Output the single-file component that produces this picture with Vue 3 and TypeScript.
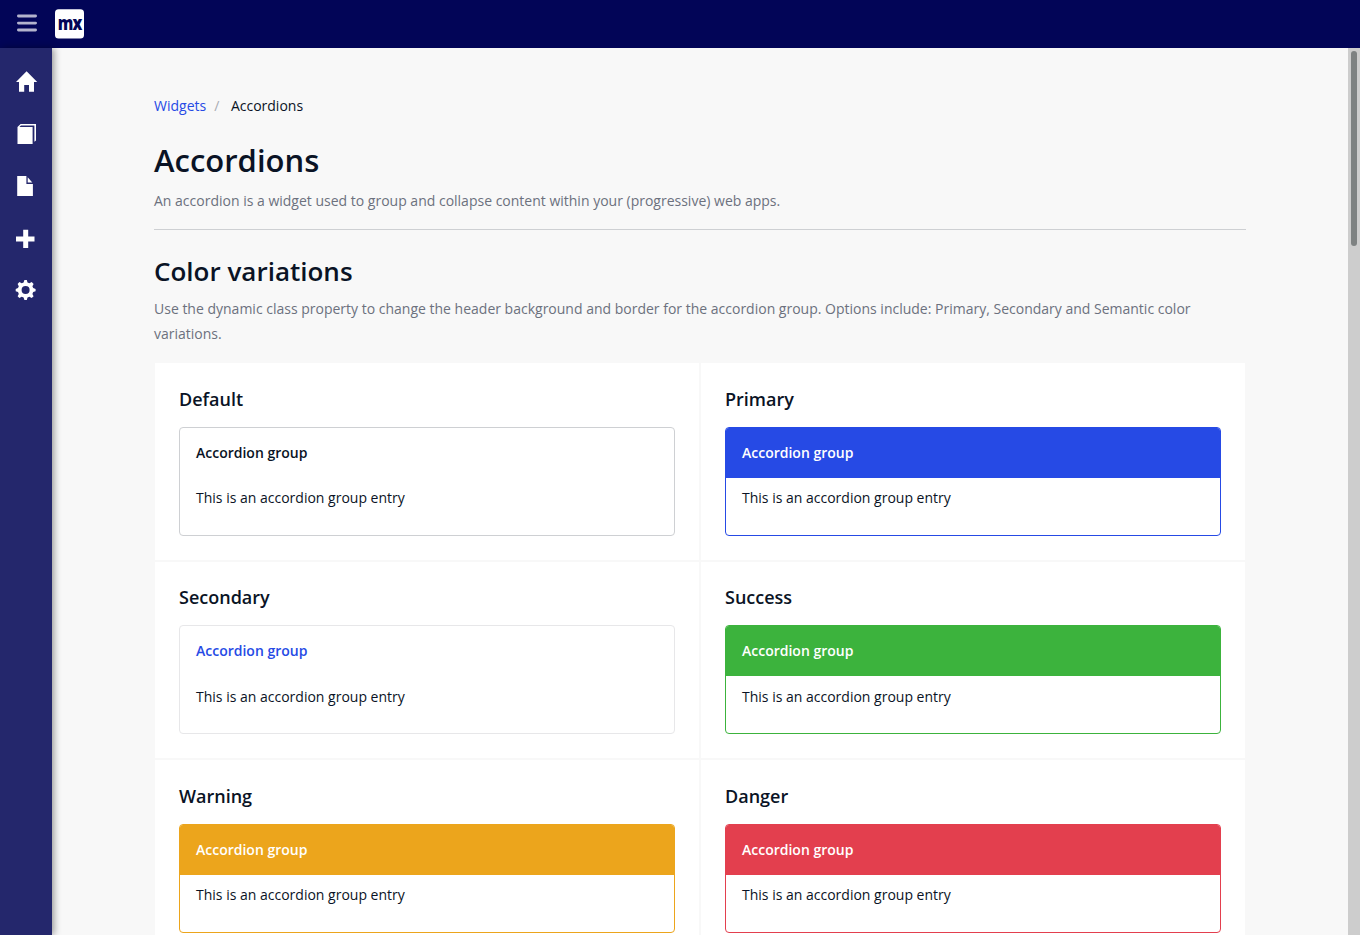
<script setup lang="ts">
interface Variation {
  title: string
  kind: string
}

const variations: Variation[] = [
  { title: 'Default', kind: 'default' },
  { title: 'Primary', kind: 'primary' },
  { title: 'Secondary', kind: 'secondary' },
  { title: 'Success', kind: 'success' },
  { title: 'Warning', kind: 'warning' },
  { title: 'Danger', kind: 'danger' },
]
</script>

<template>
  <div class="app">
    <header class="topbar">
      <button class="toggle" aria-label="Toggle sidebar">
        <svg width="20" height="18" viewBox="0 0 20 18">
          <path d="M1.4 2h17.2M1.4 9.1h17.2M1.4 16h17.2" />
        </svg>
      </button>
      <svg class="logo" width="30" height="30" viewBox="0 0 30 30">
        <rect x="0" y="0.2" width="29" height="29.4" rx="3.6" fill="#fff" />
        <text transform="translate(2.8 20.6) scale(0.8 1)">mx</text>
      </svg>
    </header>
    <div class="body">
      <nav class="sidebar">
        <a><svg viewBox="0 0 24 24"><path d="M12.6 1.2 23.2 12H20v9.8h-5V15h-4.8v6.8H5V12H2z" /></svg></a>
        <a><svg viewBox="0 0 24 24"><path d="M6.6 2H22v16.6l-1.6 1.2V3.4H6.3zM3.5 5 6.6 2l.4 1.4-1.6 1.5h13.2V22H3.5z" /></svg></a>
        <a><svg viewBox="0 0 24 24"><path d="M3.2 2h9.2v8h6.5v12H3.2zM13.7 3.2l4.6 5.4h-4.6z" /></svg></a>
        <a><svg viewBox="0 0 24 24"><path d="M9.2 3.7h5v6.7h6.3v5h-6.3V22h-5v-6.6H2v-5h7.2z" /></svg></a>
        <a>
          <svg viewBox="0 0 24 24">
            <path
              fill-rule="evenodd"
              d="M10.4 2h2.4l.7 2.5 1.9.8 2.3-1.2 1.9 1.8-1.2 2.3.8 1.9 2.4.8v2.4l-2.4.8-.8 1.9 1.2 2.2-1.9 1.8-2.3-1.2-1.9.8-.7 2.4h-2.4l-.8-2.4-1.9-.8L5.4 20l-1.8-1.8L4.8 16 4 14.1l-2.3-.8v-2.4l2.3-.8.8-1.9-1.2-2.3 1.8-1.8 2.3 1.2 1.9-.8zM11.6 8a4 4 0 1 0 0 8 4 4 0 0 0 0-8z"
            />
          </svg>
        </a>
      </nav>
      <main class="content">
        <ol class="breadcrumb">
          <li><a>Widgets</a></li>
          <li class="sep">/</li>
          <li>Accordions</li>
        </ol>
        <h1>Accordions</h1>
        <p class="intro">An accordion is a widget used to group and collapse content within your (progressive) web apps.</p>
        <hr />
        <h2>Color variations</h2>
        <p class="detail">
          Use the dynamic class property to change the header background and border for the accordion group. Options
          include: Primary, Secondary and Semantic color variations.
        </p>
        <div class="grid">
          <section v-for="v in variations" :key="v.kind" class="cell">
            <h3>{{ v.title }}</h3>
            <div class="accordion" :class="v.kind">
              <div class="head">Accordion group</div>
              <div class="entry">This is an accordion group entry</div>
            </div>
          </section>
        </div>
      </main>
      <div class="scrollbar"><div class="thumb" /></div>
    </div>
  </div>
</template>

<style>
body {
  margin: 0;
  overflow: hidden;
}
</style>

<style scoped>
.app {
  height: 100vh;
  display: flex;
  flex-direction: column;
  overflow: hidden;
  font-family: 'Open Sans', sans-serif;
  font-size: 14px;
  line-height: 20px;
  color: #0a1325;
  background: #f8f8f8;
}
.topbar {
  flex: none;
  height: 48px;
  box-sizing: border-box;
  display: flex;
  align-items: center;
  padding-left: 17px;
  background: #020557;
}
.toggle {
  padding: 0;
  margin: 0 18px 2px 0;
  border: 0;
  background: none;
  display: flex;
}
.toggle path {
  stroke: #b3b4cd;
  stroke-width: 2.8;
  stroke-linecap: round;
}
.logo {
  overflow: visible;
}
.logo text {
  font-family: 'Open Sans', sans-serif;
  font-size: 19.5px;
  font-weight: 800;
  letter-spacing: -1.2px;
  fill: #020557;
}
.body {
  flex: 1;
  min-height: 0;
  display: flex;
}
.sidebar {
  flex: none;
  width: 52px;
  z-index: 1;
  display: flex;
  flex-direction: column;
  padding-top: 8px;
  box-sizing: border-box;
  background: #24276c;
  box-shadow: 2px 0 7px rgba(0, 0, 0, 0.4);
}
.sidebar a {
  height: 52px;
  display: flex;
  align-items: center;
  padding-left: 14px;
}
.sidebar svg {
  width: 24px;
  height: 24px;
  fill: #fff;
}
.content {
  flex: 1;
  min-width: 0;
  padding: 46px 102px 0;
  overflow: hidden;
}
.breadcrumb {
  display: flex;
  list-style: none;
  margin: 0;
  padding: 2px 0 0;
}
.breadcrumb a {
  color: #264ae5;
}
.breadcrumb .sep {
  color: #a9acb3;
  padding: 0 11.6px 0 8px;
}
h1,
h2,
h3 {
  margin: 0;
  font-weight: 600;
}
h1 {
  margin-top: 23px;
  font-size: 31px;
  line-height: 42px;
}
p {
  margin: 0;
  color: #6c717e;
  line-height: 25px;
}
.intro {
  margin-top: 7px;
}
hr {
  margin: 16px 0 0;
  border: 0;
  border-top: 1px solid #ced0d3;
}
h2 {
  margin-top: 23px;
  font-size: 26px;
  line-height: 36px;
}
.detail {
  margin-top: 7px;
}
.grid {
  margin-top: 16.2px;
  display: grid;
  grid-template-columns: 1fr 1fr;
}
.cell {
  height: 198.4px;
  box-sizing: border-box;
  padding: 23.8px 24px 24px;
  border: 1px solid #f8f8f8;
  background: #fff;
}
h3 {
  font-size: 18px;
  line-height: 24px;
  margin-bottom: 16px;
}
.accordion {
  height: 108.9px;
  box-sizing: border-box;
  border: 1px solid #ced0d3;
  border-radius: 4px;
  overflow: hidden;
}
.head {
  height: 50px;
  box-sizing: border-box;
  padding: 15px 16px;
  font-weight: 600;
}
.entry {
  padding: 10.3px 16px 0;
}
.primary,
.success,
.warning,
.danger {
  border-color: var(--tone);
}
.primary .head,
.success .head,
.warning .head,
.danger .head {
  background: var(--tone);
  color: #fff;
}
.primary {
  --tone: #264ae5;
}
.success {
  --tone: #3cb33d;
}
.warning {
  --tone: #eca51c;
}
.danger {
  --tone: #e33f4e;
}
.secondary {
  border-color: #e7e7e9;
}
.secondary .head {
  color: #264ae5;
}
.scrollbar {
  flex: none;
  width: 12px;
  box-sizing: border-box;
  padding: 3px 3px 0;
  background: #cdcdcd;
}
.thumb {
  width: 6px;
  height: 195px;
  border-radius: 3px;
  background: #7e8282;
}
</style>
